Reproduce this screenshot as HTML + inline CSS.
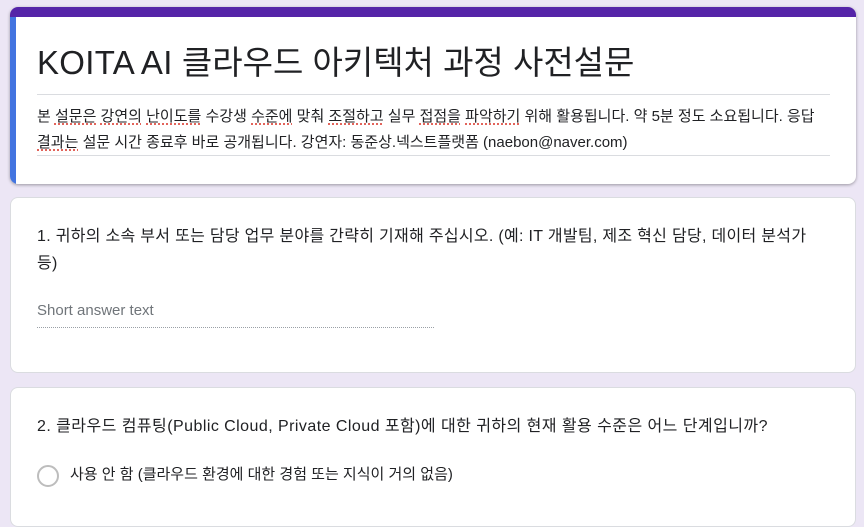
<!DOCTYPE html>
<html><head><meta charset="utf-8"><style>
body{margin:0;width:864px;height:510px;overflow:hidden;background:#ece6f5;font-family:"Liberation Sans","Noto Sans CJK KR",sans-serif;color:#202124}
.card{position:absolute;left:10px;width:846px;background:#fff;border-radius:8px;border:1px solid #dadce0;box-sizing:border-box}
.u{text-decoration:underline dotted #d93025;text-underline-offset:3px}
</style></head><body>
<div class="card" style="top:7px;height:177px;overflow:hidden;border:none;box-shadow:0 1px 3px rgba(0,0,0,.35)">
 <div style="position:absolute;left:0;top:0;right:0;height:10px;background:#5524a8"></div>
 <div style="position:absolute;left:0;top:10px;bottom:0;width:6px;background:#4374e0"></div>
 <div style="position:absolute;left:27px;top:34px;font-size:33px;line-height:44px;color:#202124;white-space:nowrap"><span style="letter-spacing:0.3px">KOITA AI</span> <span style="letter-spacing:0px">클라우드 아키텍처 과정 사전설문</span></div>
 <div style="position:absolute;left:27px;top:87px;width:793px;border-top:1px solid #dadce0"></div>
 <div style="position:absolute;left:27px;top:97px;width:810px;font-size:15px;line-height:26px;white-space:nowrap">본 <span class="u">설문은</span> <span class="u">강연의</span> <span class="u">난이도를</span> 수강생 <span class="u">수준에</span> 맞춰 <span class="u">조절하고</span> 실무 <span class="u">접점을</span> <span class="u">파악하기</span> 위해 활용됩니다. 약 5분 정도 소요됩니다. 응답<br><span class="u">결과는</span> 설문 시간 종료후 바로 공개됩니다. 강연자: 동준상.넥스트플랫폼 (naebon@naver.com)</div>
 <div style="position:absolute;left:27px;top:148px;width:793px;border-top:1px solid #dadce0"></div>
</div>
<div class="card" style="top:197px;height:176px">
 <div style="position:absolute;left:26px;top:25px;width:800px;font-size:16px;line-height:27px;letter-spacing:0.3px;white-space:nowrap">1. 귀하의 소속 부서 또는 담당 업무 분야를 간략히 기재해 주십시오. (예: IT 개발팀, 제조 혁신 담당, 데이터 분석가<br>등)</div>
 <div style="position:absolute;left:26px;top:104px;font-size:15px;color:#70757a">Short answer text</div>
 <div style="position:absolute;left:26px;top:129px;width:397px;border-top:1px dotted #9aa0a6"></div>
</div>
<div class="card" style="top:387px;height:140px">
 <div style="position:absolute;left:26px;top:27px;font-size:16px;line-height:24px;letter-spacing:0.45px;white-space:nowrap">2. 클라우드 컴퓨팅(Public Cloud, Private Cloud 포함)에 대한 귀하의 현재 활용 수준은 어느 단계입니까?</div>
 <div style="position:absolute;left:26px;top:77px;width:18px;height:18px;border:2px solid #bdbdbd;border-radius:50%"></div>
 <div style="position:absolute;left:59px;top:76px;font-size:15px;line-height:22px">사용 안 함 (클라우드 환경에 대한 경험 또는 지식이 거의 없음)</div>
</div>
</body></html>
